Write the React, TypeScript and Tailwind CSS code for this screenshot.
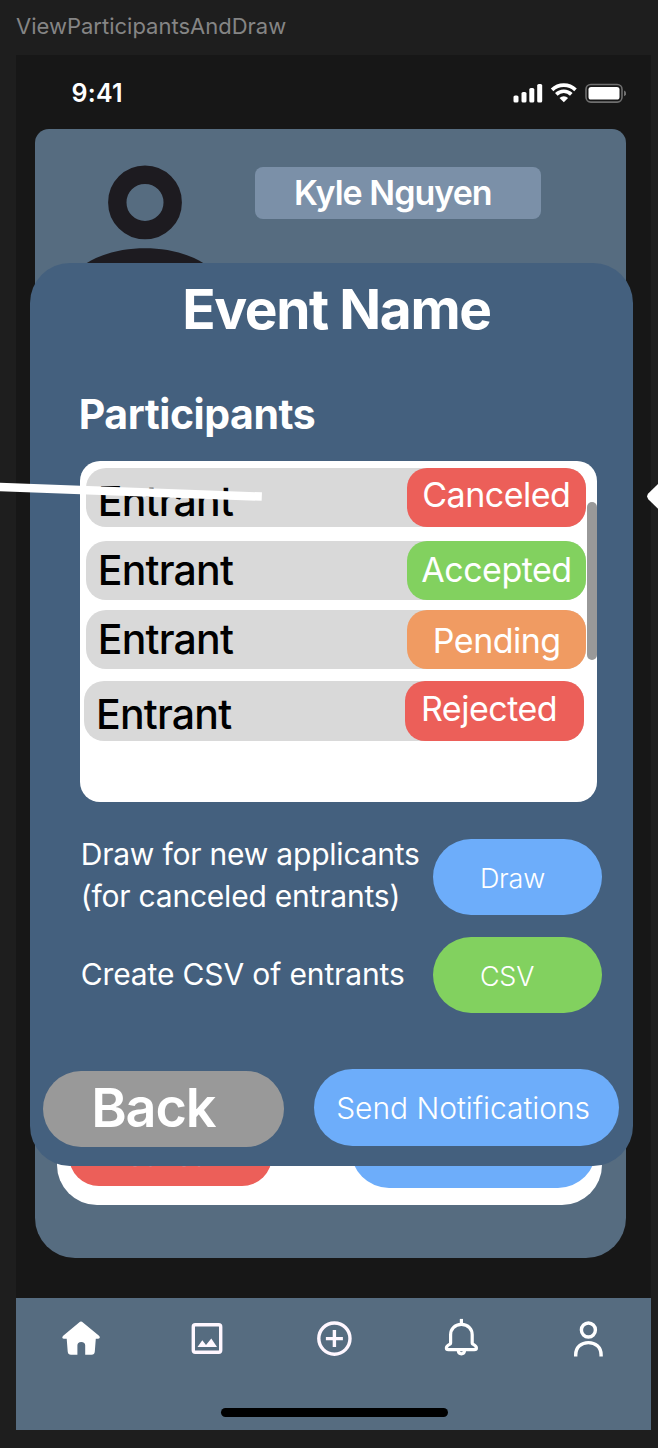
import React from "react";

type Status = "Canceled" | "Accepted" | "Pending" | "Rejected";

const pillColor: Record<Status, string> = {
  Canceled: "bg-[#ec5f59]",
  Accepted: "bg-[#82d15f]",
  Pending: "bg-[#f09b62]",
  Rejected: "bg-[#ec5f59]",
};

function StatusBar() {
  return (
    <div className="flex h-[74.5px] items-start justify-between pl-[55.5px] pr-[25.5px]">
      <span className="mt-[23.5px] text-[25px] leading-[30px] font-semibold tracking-[0.25px]">9:41</span>
      <svg className="mt-[26px]" width="114" height="24" viewBox="0 0 114 24" fill="none">
        <g fill="#fff">
          <rect x="1.5" y="14.5" width="5" height="7" rx="1.6" />
          <rect x="9.5" y="11" width="5" height="10.5" rx="1.6" />
          <rect x="17.3" y="7" width="5" height="14.5" rx="1.6" />
          <rect x="25.2" y="3" width="5" height="18.5" rx="1.6" />
        </g>
        <g stroke="#fff" strokeWidth="3.7">
          <path d="M40.1 8.8 A17 17 0 0 1 63.5 8.8" />
          <path d="M44.3 13.3 A10.8 10.8 0 0 1 59.3 13.3" />
        </g>
        <path d="M51.8 21.2 L47.5 17 A6.2 6.2 0 0 1 56.1 17 Z" fill="#fff" />
        <rect x="74" y="3.5" width="36" height="17.6" rx="4.8" stroke="#6f6f6f" strokeWidth="1.6" />
        <rect x="76.5" y="6" width="31" height="12.6" rx="2.6" fill="#fff" />
        <path d="M112 9.5 Q114.2 10.4 114.2 12.4 Q114.2 14.4 112 15.2 Z" fill="#6f6f6f" />
      </svg>
    </div>
  );
}

function EntrantRow({ status, row, label, pill }: { status: Status; row: string; label: string; pill: string }) {
  return (
    <div className={`flex h-[59.2px] w-[500px] shrink-0 justify-between rounded-[20px] bg-[#d9d9d9] ${row}`}>
      <span className={`ml-[12px] text-[41px] leading-[50px] font-medium tracking-[-0.8px] text-black ${label}`}>Entrant</span>
      <div className={`flex w-[178.5px] items-start rounded-[20px] ${pillColor[status]}`}>
        <span className={`text-[34px] leading-[40px] tracking-[-0.5px] whitespace-nowrap ${pill}`}>{status}</span>
      </div>
    </div>
  );
}

function ProfileCard() {
  return (
    <div className="ml-[18.5px] flex h-[1128.5px] w-[591.5px] flex-col justify-between rounded-t-[14px] rounded-b-[40px] bg-[#566c80]">
      <div className="flex items-start pt-[36px]">
        <svg className="ml-[36px]" width="148" height="130" viewBox="0 0 148 130" fill="none">
          <circle cx="74" cy="37.4" r="27.7" stroke="#1d1b20" strokeWidth="18.4" />
          <path d="M-8 130 C0 96 40 83.2 74 83.2 C108 83.2 148 96 156 130 Z" fill="#1d1b20" />
        </svg>
        <div className="mt-[1.5px] ml-[36.5px] h-[52.5px] w-[286px] rounded-[8px] bg-[#7b90a8] pt-[6.5px] pl-[39px] text-[34px] leading-[40px] font-semibold tracking-[-0.98px] whitespace-nowrap">
          Kyle Nguyen
        </div>
      </div>
      <div className="mb-[53px] ml-[22.3px] flex h-[120px] w-[545.5px] items-end justify-between rounded-[40px] bg-white pr-[6px] pl-[12px]">
        <div className="mb-[18.5px] h-[76px] w-[203.5px] rounded-[30px] bg-[#ec5f59]">
          <svg width="203" height="60" viewBox="0 0 203 60" fill="#d68f94">
            <rect x="64" y="54.5" width="4" height="2" rx="1" />
            <rect x="80" y="54.5" width="3" height="2" rx="1" />
            <rect x="113" y="54.5" width="4" height="2" rx="1" />
            <rect x="128.5" y="54.5" width="3" height="2" rx="1" />
          </svg>
        </div>
        <div className="mb-[16.5px] h-[76px] w-[245.5px] rounded-[38px] bg-[#6dadfa]" />
      </div>
    </div>
  );
}

function EventDialog() {
  return (
    <section className="absolute top-[208.5px] left-[13.7px] flex h-[902.5px] w-[603px] flex-col rounded-[40px] bg-[#44607e]">
      <h1 className="mt-[13px] ml-[152.5px] text-[55px] leading-[66px] font-bold tracking-[-1.4px]">Event Name</h1>
      <h2 className="mt-[47px] ml-[49px] text-[41px] leading-[50px] font-bold tracking-[-0.45px]">Participants</h2>
      <div className="mt-[22px] ml-[50.8px] flex h-[340.5px] w-[516.7px] justify-between rounded-[20px] bg-white">
        <div className="flex flex-col pt-[7px]">
          <EntrantRow status="Canceled" row="ml-[5.3px]" label="mt-[8px]" pill="pt-[7px] pl-[15px]" />
          <EntrantRow status="Accepted" row="ml-[5.3px] mt-[13.8px]" label="mt-[4.5px]" pill="pt-[9px] pl-[14px]" />
          <EntrantRow status="Pending" row="ml-[5.3px] mt-[10px]" label="mt-[4px]" pill="pt-[11px] pl-[25.5px]" />
          <EntrantRow status="Rejected" row="ml-[3.5px] mt-[12px]" label="mt-[7.5px]" pill="pt-[7.5px] pl-[15.5px]" />
        </div>
        <div className="mt-[40.5px] h-[158px] w-[10px] rounded-full bg-[#999]" />
      </div>
      <div className="mt-[37.3px] ml-[51px] flex h-[76.3px] items-start justify-between pr-[30.5px]">
        <p className="mt-[-6px] text-[30px] leading-[42px] tracking-[-0.21px] whitespace-nowrap">
          Draw for new applicants
          <br />
          (for canceled entrants)
        </p>
        <button className="h-[76.3px] w-[169.3px] shrink-0 rounded-full bg-[#6dadfa] pt-[5px] pl-[47px] text-left text-[27px] font-light tracking-[-0.2px]">Draw</button>
      </div>
      <div className="mt-[21.8px] ml-[51px] flex h-[76.3px] items-center justify-between pr-[30.5px]">
        <p className="mt-[-3px] text-[30px] leading-[42px] tracking-[-0.13px] whitespace-nowrap">Create CSV of entrants</p>
        <button className="h-[76.3px] w-[169.3px] shrink-0 rounded-full bg-[#82d15f] pt-[5px] pl-[47px] text-left text-[27px] font-light tracking-[-0.2px]">CSV</button>
      </div>
      <div className="mt-[56px] flex items-start justify-between pr-[13.5px] pl-[13.5px]">
        <button className="mt-[2px] h-[76.3px] w-[241px] rounded-full bg-[#999] pb-[3px] pl-[48px] text-left text-[54px] leading-[72px] font-semibold tracking-[-1.2px]">
          Back
        </button>
        <button className="h-[76.5px] w-[305px] rounded-full bg-[#6dadfa] pt-[1px] pl-[22px] text-left text-[30px] leading-[74px] font-light tracking-[-0.05px] whitespace-nowrap">
          Send Notifications
        </button>
      </div>
    </section>
  );
}

function TabBar() {
  return (
    <nav className="mt-[40.5px] flex h-[132px] flex-col items-center bg-[#566c80]">
      <div className="flex h-[80px] w-full items-center justify-around pl-[1.2px]">
        <svg width="44" height="44" viewBox="0 0 44 44" fill="#fff">
          <path d="M21 5.8 Q22 5.1 23 5.8 L40 19.7 Q41.4 21 40.6 22.1 Q40.2 22.8 39 22.8 H36.8 L35.8 35.5 Q35.5 38.7 32.5 38.7 H26.2 V29.5 Q26.2 26 22.2 26 Q18.4 26 18.4 29.5 V38.7 H12 Q9 38.7 8.7 35.5 L7.7 22.8 H5 Q3.7 22.8 3.4 22 Q2.9 20.9 4.2 19.7 Z" />
        </svg>
        <svg width="44" height="44" viewBox="0 0 44 44" fill="none">
          <rect x="8.3" y="8.8" width="27.4" height="27.4" rx="2" stroke="#fff7ff" strokeWidth="3.4" />
          <path d="M12.5 31 L17.3 24.3 L21 29 L26.3 22.5 L32 31 Z" fill="#fff7ff" />
        </svg>
        <svg width="44" height="44" viewBox="0 0 44 44" fill="none" stroke="#fff7ff" strokeWidth="3.4">
          <circle cx="22.4" cy="22.6" r="15.6" />
          <path d="M22.4 14.1 V31.1 M13.9 22.6 H30.9" />
        </svg>
        <svg width="44" height="44" viewBox="0 0 44 44" fill="none" stroke="#fff" strokeWidth="3.2" strokeLinejoin="round">
          <path d="M22.4 2.9 V8.2" />
          <path d="M22.4 8.4 C15.4 8.4 11.6 13.4 11.6 18.8 V26.9 Q11.6 27.6 10.9 28.1 Q7.4 29.8 7.4 32 Q7.4 33.6 9.4 33.6 H35.4 Q37.4 33.6 37.4 32 Q37.4 29.8 33.9 28.1 Q33.2 27.6 33.2 26.9 V18.8 C33.2 13.4 29.4 8.4 22.4 8.4 Z" />
          <path d="M19.2 34.4 Q19.6 37.9 22.4 37.9 Q25.2 37.9 25.6 34.4" />
        </svg>
        <svg width="44" height="44" viewBox="0 0 44 44" fill="none" stroke="#fff" strokeWidth="3.4">
          <circle cx="22.4" cy="14" r="7" />
          <path d="M9.7 40.6 V38.9 C9.7 31.2 15.4 26.6 22.4 26.6 C29.4 26.6 35.1 31.2 35.1 38.9 V40.6" />
        </svg>
      </div>
      <div className="mt-[30px] ml-[1.5px] h-[9px] w-[227px] rounded-full bg-black" />
    </nav>
  );
}

export default function App() {
  return (
    <div className="relative h-[1448px] w-[658px] overflow-hidden bg-[#1e1e1e] font-['Inter',sans-serif] text-white">
      <div className="h-[54.5px] pt-[13px] pl-[16px] text-[22px] leading-[26px] text-[#858585]">ViewParticipantsAndDraw</div>
      <main className="relative ml-[16px] h-[1375.5px] w-[635.3px] bg-[#171717]">
        <StatusBar />
        <ProfileCard />
        <TabBar />
        <EventDialog />
      </main>
      {/* Prototype connectors drawn over the frame */}
      <svg className="pointer-events-none absolute top-0 left-0" width="658" height="1448" viewBox="0 0 658 1448">
        <path d="M-4 486.8 L261.8 496.6" stroke="#fff" strokeWidth="8.5" />
        <path d="M662 480 L648.5 493.2 Q645.8 496.3 648.5 499.4 L662 512.8 Z" fill="#fff" />
      </svg>
    </div>
  );
}
